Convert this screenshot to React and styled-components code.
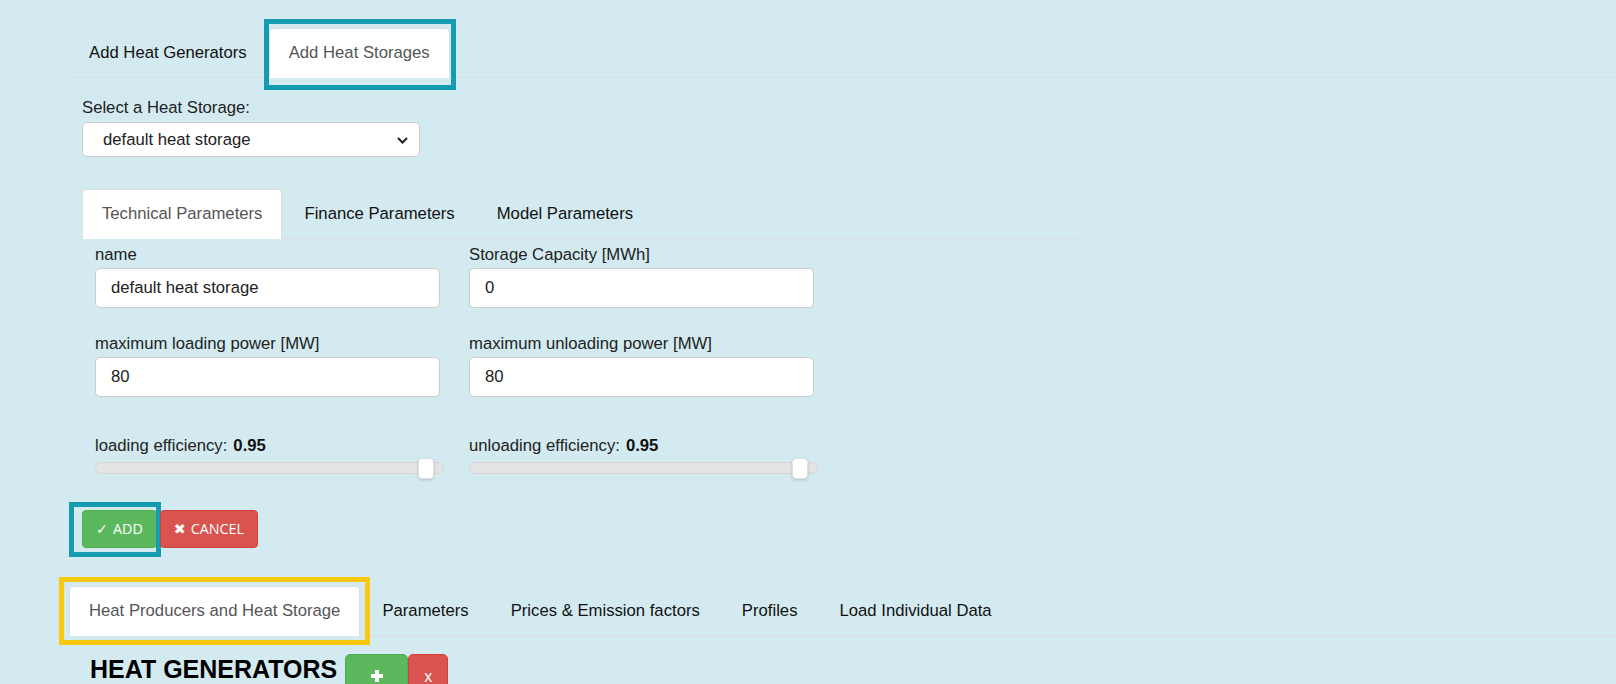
import React from "react";
import styled, { createGlobalStyle, css } from "styled-components";

const GlobalStyle = createGlobalStyle`
  html, body {
    margin: 0;
    padding: 0;
    background: #d3ebf0;
  }
  body {
    font-family: "Liberation Sans", Arial, sans-serif;
    font-size: 16.7px;
    color: #222;
  }
  * {
    box-sizing: border-box;
  }
`;

const Page = styled.div`
  min-height: 684px;
  padding: 28px 0 0 69px;
  overflow: hidden;
`;

const TabList = styled.ul`
  display: flex;
  margin: ${(p) => p.$mt || 0}px 0 0 0;
  padding: 0;
  list-style: none;
  border-bottom: 1px solid #dcdcdc;
  width: ${(p) => (p.$width ? `${p.$width}px` : "auto")};
`;

const Tab = styled.li`
  position: relative;
  margin: 0 2px -1px 0;
  padding: 12px 19px;
  line-height: 24px;
  border: 1px solid transparent;
  border-radius: 4px 4px 0 0;
  color: #111;
  white-space: nowrap;
  cursor: pointer;
  ${(p) =>
    p.$active &&
    css`
      background: #fff;
      color: #555;
      border-color: #ddd #ddd transparent;
    `}
`;

const Highlight = styled.span`
  position: absolute;
  top: ${(p) => p.$t}px;
  left: ${(p) => p.$l}px;
  right: ${(p) => p.$r}px;
  bottom: ${(p) => p.$b}px;
  border: 5px solid ${(p) => p.$color};
  pointer-events: none;
`;

const Panel = styled.div`
  padding-left: 13px;
`;

const SelectLabel = styled.label`
  display: block;
  margin-top: 18px;
  line-height: 24px;
`;

const SelectWrap = styled.div`
  position: relative;
  width: 338px;
  margin-top: 2px;

  svg {
    position: absolute;
    right: 12px;
    top: 15px;
    pointer-events: none;
  }
`;

const Select = styled.select`
  appearance: none;
  width: 100%;
  height: 35px;
  padding: 0 30px 0 20px;
  font-family: inherit;
  font-size: 16.7px;
  color: #222;
  background: #fff;
  border: 1px solid #ccc;
  border-radius: 5px;
  outline: none;
`;

const FormGrid = styled.div`
  display: grid;
  grid-template-columns: 345px 345px;
  column-gap: 29px;
  row-gap: 24px;
  padding: 4px 0 0 13px;
`;

const Field = styled.div`
  display: flex;
  flex-direction: column;
  margin-top: ${(p) => p.$mt || 0}px;
`;

const Label = styled.label`
  line-height: 24px;
  margin-bottom: 1px;
  color: #222;

  b {
    margin-left: 6px;
    color: #111;
  }
`;

const Input = styled.input`
  height: 40px;
  padding: 0 15px;
  font-family: inherit;
  font-size: 16.7px;
  color: #222;
  background: #fff;
  border: 1px solid #ccc;
  border-radius: 5px;
  outline: none;
`;

const Track = styled.div`
  position: relative;
  width: calc(100% + 4px);
  height: 12px;
  margin-top: 3px;
  background: #e4e4e4;
  border: 1px solid #d6d6d6;
  border-radius: 6px;
`;

const Thumb = styled.div`
  position: absolute;
  top: -5px;
  width: 16px;
  height: 21px;
  transform: translateX(-50%);
  background: #fff;
  border: 1px solid #e0e0e0;
  border-radius: 4px;
  box-shadow: 0 1px 3px rgba(0, 0, 0, 0.18);
`;

const ButtonRow = styled.div`
  display: flex;
  gap: 3px;
  margin-top: 36px;
`;

const Button = styled.button`
  position: relative;
  padding: 8px ${(p) => p.$padX}px;
  line-height: 20px;
  font-family: "Open Sans", "DejaVu Sans", sans-serif;
  font-size: 14.3px;
  color: #fff;
  border: 1px solid;
  border-radius: 4px;
  cursor: pointer;
  background: ${(p) => (p.$variant === "danger" ? "#d9534f" : "#5cb85c")};
  border-color: ${(p) => (p.$variant === "danger" ? "#d43f3a" : "#4cae4c")};
`;

const ButtonIcon = styled.span`
  margin-right: ${(p) => p.$gap}px;
`;

const HeadingRow = styled.div`
  display: flex;
  align-items: flex-start;
  margin-top: 18px;
  padding-left: 21px;
`;

const Heading = styled.h3`
  margin: 0 8px 0 0;
  font-size: 25px;
  line-height: 30px;
  font-weight: bold;
  color: #000;
`;

const SmallButton = styled.button`
  display: flex;
  justify-content: center;
  padding-top: 14px;
  height: 40px;
  width: ${(p) => p.$w}px;
  color: #fff;
  font-family: "Liberation Sans", Arial, sans-serif;
  font-size: 16px;
  line-height: 16px;
  border: 1px solid;
  border-radius: 5px 5px 0 0;
  background: ${(p) => (p.$variant === "danger" ? "#d9534f" : "#5cb85c")};
  border-color: ${(p) => (p.$variant === "danger" ? "#d43f3a" : "#4cae4c")};
`;

const Chevron = () => (
  <svg width="11" height="7" viewBox="0 0 11 7">
    <path d="M1 1l4.5 4.5L10 1" fill="none" stroke="#222" strokeWidth="2" />
  </svg>
);

const PlusIcon = () => (
  <svg width="12" height="12" viewBox="0 0 12 12" style={{ marginTop: 1 }}>
    <path d="M4 0h4v4h4v4H8v4H4V8H0V4h4z" fill="#fff" />
  </svg>
);

const Slider = ({ value, min = 0, max = 1 }) => {
  const pct = ((value - min) / (max - min)) * 100;
  return (
    <Track>
      <Thumb style={{ left: `${pct}%` }} />
    </Track>
  );
};

const App = () => {
  return (
    <Page>
      <GlobalStyle />
      <TabList>
        <Tab>Add Heat Generators</Tab>
        <Tab $active>
          Add Heat Storages
          <Highlight $t={-10} $l={-6} $r={-7} $b={-13} $color="#149db1" />
        </Tab>
      </TabList>

      <Panel>
        <SelectLabel>Select a Heat Storage:</SelectLabel>
        <SelectWrap>
          <Select defaultValue="default">
            <option value="default">default heat storage</option>
          </Select>
          <Chevron />
        </SelectWrap>

        <TabList $mt={32} $width={999}>
          <Tab $active>Technical Parameters</Tab>
          <Tab>Finance Parameters</Tab>
          <Tab>Model Parameters</Tab>
        </TabList>

        <FormGrid>
          <Field>
            <Label>name</Label>
            <Input defaultValue="default heat storage" />
          </Field>
          <Field>
            <Label>Storage Capacity [MWh]</Label>
            <Input defaultValue="0" />
          </Field>
          <Field>
            <Label>maximum loading power [MW]</Label>
            <Input defaultValue="80" />
          </Field>
          <Field>
            <Label>maximum unloading power [MW]</Label>
            <Input defaultValue="80" />
          </Field>
          <Field $mt={13}>
            <Label>
              loading efficiency:<b>0.95</b>
            </Label>
            <Slider value={0.95} />
          </Field>
          <Field $mt={13}>
            <Label>
              unloading efficiency:<b>0.95</b>
            </Label>
            <Slider value={0.95} />
          </Field>
        </FormGrid>

        <ButtonRow>
          <Button $padX={13}>
            <ButtonIcon $gap={5}>✓</ButtonIcon>ADD
            <Highlight $t={-9} $l={-14} $r={-5} $b={-10} $color="#149db1" />
          </Button>
          <Button $padX={13} $variant="danger">
            <ButtonIcon $gap={5}>✖</ButtonIcon>CANCEL
          </Button>
        </ButtonRow>
      </Panel>

      <TabList $mt={38}>
        <Tab $active>
          Heat Producers and Heat Storage
          <Highlight $t={-10} $l={-11} $r={-11} $b={-10} $color="#fbc711" />
        </Tab>
        <Tab>Parameters</Tab>
        <Tab>Prices &amp; Emission factors</Tab>
        <Tab>Profiles</Tab>
        <Tab>Load Individual Data</Tab>
      </TabList>

      <HeadingRow>
        <Heading>HEAT GENERATORS</Heading>
        <SmallButton $w={63}>
          <PlusIcon />
        </SmallButton>
        <SmallButton $w={40} $variant="danger">
          x
        </SmallButton>
      </HeadingRow>
    </Page>
  );
};

export default App;
